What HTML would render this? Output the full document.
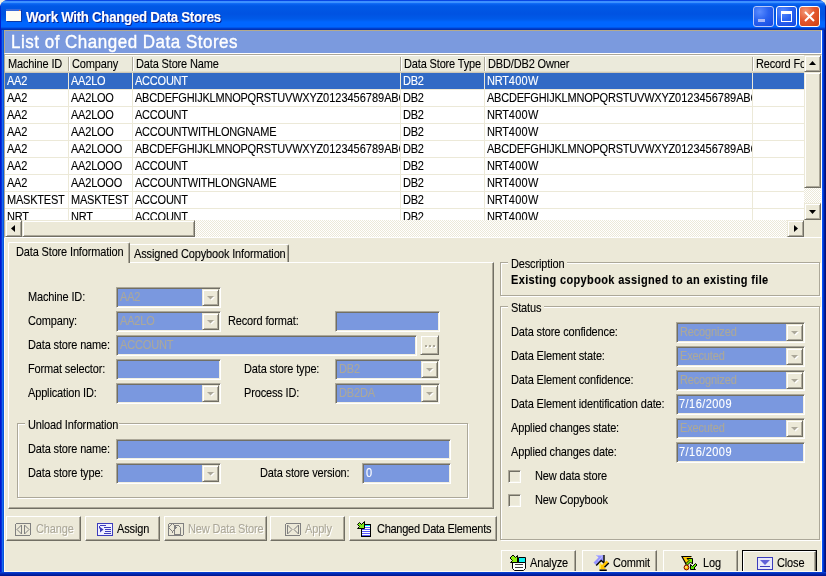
<!DOCTYPE html><html><head><meta charset="utf-8"><style>
*{box-sizing:border-box;margin:0;padding:0}
html,body{width:826px;height:576px;overflow:hidden;background:#f3f0e2}
body{position:relative;font-family:"Liberation Sans",sans-serif;font-size:11px;letter-spacing:-0.15px;color:#000}
.a{position:absolute}
.t{position:absolute;white-space:nowrap;line-height:12px;transform:scaleY(1.12);transform-origin:0 9.8px;will-change:transform;-webkit-text-stroke-width:0.1px}
#win{position:absolute;left:0;top:0;width:826px;height:576px;border-radius:8px 8px 0 0;overflow:hidden;
 background:linear-gradient(90deg,#0019cf 0,#0019cf 1px,#0a30d8 1px,#0a30d8 2px,#166aee 2px,#166aee 3px,#0855dd 3px,#0855dd 822px,#0550f5 822px,#0550f5 823px,#0036cc 823px,#0036cc 824px,#001c98 824px,#001c98 825px,#00107c 825px)}
#title{position:absolute;left:0;top:0;width:826px;height:30px;
 background:linear-gradient(180deg,#0846e4 0,#0846e4 1px,#3d90ff 1px,#3d90ff 3px,#1474fc 3px,#0a62f0 4px,#0058e6 6px,#0053e2 14px,#005ae8 19px,#0066ff 22px,#0066ff 27px,#0048d8 28px,#0036c0 29px,#0030b0 30px)}
#client{position:absolute;left:4px;top:30px;width:818px;height:542px;background:#ece9d8;border-left:1px solid #fffbf0;border-right:1px solid #fffbf0;border-bottom:1px solid #fffbf0}
#bottomb{position:absolute;z-index:10;left:0;top:572px;width:826px;height:4px;background:linear-gradient(180deg,#0848e0,#0532c0 1px,#001c9c 3px,#00138a 4px)}
.sunk{position:absolute;border:1px solid;border-color:#aca899 #fff #fff #aca899;box-shadow:inset 1px 1px #716f64,inset -1px -1px #f1efe2;background:#7a98df}
.btn{position:absolute;border:1px solid;border-color:#fff #716f64 #716f64 #fff;box-shadow:inset -1px -1px #aca899;background:#ece9d8}
.sbtn{position:absolute;border:1px solid;border-color:#ece9d8 #716f64 #716f64 #ece9d8;box-shadow:inset 1px 1px #fff,inset -1px -1px #aca899;background:#ece9d8}
.grp{position:absolute;border:1px solid #aca899;box-shadow:1px 1px #fff,inset 1px 1px #fff}
.dis{color:#aca899}
.track{position:absolute;background:repeating-conic-gradient(#ece9d8 0 25%,#fff 0 50%) 0 0/2px 2px}
</style></head><body><div id="win"><div id="title"></div><div id="client"></div><div id="bottomb"></div><div class="a" style="left:6px;top:9px;width:15px;height:13px">
<div class="a" style="left:0;top:0;width:15px;height:12px;background:#fffdf4;border-top:2px solid #3a6ad8;box-shadow:1px 1px #0b3aa8"></div>
<div class="a" style="left:13px;top:1px;width:1px;height:1px;background:#f06020"></div></div><div class="t" style="left:26px;top:10px;font-weight:bold;font-size:13.3px;letter-spacing:-0.3px;line-height:15px;color:#fff;text-shadow:1px 1px #0a1e8c">Work With Changed Data Stores</div><div class="a" style="left:753px;top:6px;width:21px;height:21px;border:1px solid #b8c8f8;border-radius:3px;background:radial-gradient(circle at 30% 25%,#5a8cff 0,#2a63f0 45%,#1548e0 100%)"><div class="a" style="left:4px;top:12px;width:7px;height:3px;background:#a8b8f8"></div></div><div class="a" style="left:776px;top:6px;width:21px;height:21px;border:1px solid #fff;border-radius:3px;background:radial-gradient(circle at 30% 25%,#5a8cff 0,#2a63f0 45%,#1548e0 100%)"><div class="a" style="left:4px;top:4px;width:11px;height:11px;border:1px solid #fff;border-top-width:3px"></div></div><div class="a" style="left:799px;top:6px;width:21px;height:21px;border:1px solid #fff;border-radius:3px;background:radial-gradient(circle at 30% 25%,#f39a7a 0,#e3572f 45%,#d0400f 100%)"><svg class="a" style="left:4px;top:4px" width="11" height="11"><path d="M1 1L10 10M10 1L1 10" stroke="#fff" stroke-width="2"/></svg></div><div class="a" style="left:0;top:6px;width:1px;height:24px;background:linear-gradient(180deg,#0030d0,#0019cf)"></div><div class="a" style="left:825px;top:6px;width:1px;height:24px;background:#001ea0"></div><div class="a" style="left:4px;top:30px;width:818px;height:24px;background:#7b9ade;border:1px solid;border-color:#b5aa8a #fff #fff #b5aa8a"></div><div class="t" style="left:11px;top:31px;font-size:17px;letter-spacing:0.5px;line-height:21px;color:#fff;-webkit-text-stroke:0.35px #fff">List of Changed Data Stores</div><div class="a" style="left:4px;top:54px;width:818px;height:184px;background:#fff;border:1px solid;border-color:#aca899 #fff #fff #aca899;overflow:hidden"><div class="a" style="left:0;top:0;width:816px;height:18px;background:linear-gradient(180deg,#fff 0,#fff 1px,#ebeadb 1px,#ebeadb 16px,#e2dfcc 16px,#e2dfcc 17px,#cbc7b8 17px)"></div><div class="t" style="left:3px;top:3px;">Machine ID</div><div class="a" style="left:63px;top:2px;width:1px;height:14px;background:#aca899"></div><div class="a" style="left:64px;top:2px;width:1px;height:14px;background:#fff"></div><div class="t" style="left:67px;top:3px;">Company</div><div class="a" style="left:127px;top:2px;width:1px;height:14px;background:#aca899"></div><div class="a" style="left:128px;top:2px;width:1px;height:14px;background:#fff"></div><div class="t" style="left:131px;top:3px;">Data Store Name</div><div class="a" style="left:395px;top:2px;width:1px;height:14px;background:#aca899"></div><div class="a" style="left:396px;top:2px;width:1px;height:14px;background:#fff"></div><div class="t" style="left:399px;top:3px;">Data Store Type</div><div class="a" style="left:479px;top:2px;width:1px;height:14px;background:#aca899"></div><div class="a" style="left:480px;top:2px;width:1px;height:14px;background:#fff"></div><div class="t" style="left:483px;top:3px;">DBD/DB2 Owner</div><div class="a" style="left:747px;top:2px;width:1px;height:14px;background:#aca899"></div><div class="a" style="left:748px;top:2px;width:1px;height:14px;background:#fff"></div><div class="t" style="left:751px;top:3px;">Record Format</div><div class="a" style="left:0;top:18px;width:799px;height:16px;background:#316ac5"></div><div class="a" style="left:0;top:34px;width:799px;height:1px;background:#ece9d8"></div><div class="a" style="left:0px;top:18px;width:63px;height:16px;overflow:hidden"><div class="t" style="left:2px;top:2px;color:#fff;letter-spacing:-0.22px">AA2</div></div><div class="a" style="left:63px;top:18px;width:1px;height:17px;background:#ece9d8"></div><div class="a" style="left:64px;top:18px;width:63px;height:16px;overflow:hidden"><div class="t" style="left:2px;top:2px;color:#fff;letter-spacing:-0.22px">AA2LO</div></div><div class="a" style="left:127px;top:18px;width:1px;height:17px;background:#ece9d8"></div><div class="a" style="left:128px;top:18px;width:267px;height:16px;overflow:hidden"><div class="t" style="left:2px;top:2px;color:#fff;letter-spacing:-0.22px">ACCOUNT</div></div><div class="a" style="left:395px;top:18px;width:1px;height:17px;background:#ece9d8"></div><div class="a" style="left:396px;top:18px;width:83px;height:16px;overflow:hidden"><div class="t" style="left:2px;top:2px;color:#fff;letter-spacing:-0.22px">DB2</div></div><div class="a" style="left:479px;top:18px;width:1px;height:17px;background:#ece9d8"></div><div class="a" style="left:480px;top:18px;width:267px;height:16px;overflow:hidden"><div class="t" style="left:2px;top:2px;color:#fff;letter-spacing:-0.22px">NRT<span style="letter-spacing:0.3px">400</span>W</div></div><div class="a" style="left:747px;top:18px;width:1px;height:17px;background:#ece9d8"></div><div class="a" style="left:0;top:35px;width:799px;height:16px;background:#fff"></div><div class="a" style="left:0;top:51px;width:799px;height:1px;background:#ece9d8"></div><div class="a" style="left:0px;top:35px;width:63px;height:16px;overflow:hidden"><div class="t" style="left:2px;top:2px;color:#000;letter-spacing:-0.22px">AA2</div></div><div class="a" style="left:63px;top:35px;width:1px;height:17px;background:#ece9d8"></div><div class="a" style="left:64px;top:35px;width:63px;height:16px;overflow:hidden"><div class="t" style="left:2px;top:2px;color:#000;letter-spacing:-0.22px">AA2LOO</div></div><div class="a" style="left:127px;top:35px;width:1px;height:17px;background:#ece9d8"></div><div class="a" style="left:128px;top:35px;width:267px;height:16px;overflow:hidden"><div class="t" style="left:2px;top:2px;color:#000;letter-spacing:-0.22px">ABCDEFGHIJKLMNOPQRSTUVWXYZ<span style="letter-spacing:0">0123456789</span>ABCDEFGH</div></div><div class="a" style="left:395px;top:35px;width:1px;height:17px;background:#ece9d8"></div><div class="a" style="left:396px;top:35px;width:83px;height:16px;overflow:hidden"><div class="t" style="left:2px;top:2px;color:#000;letter-spacing:-0.22px">DB2</div></div><div class="a" style="left:479px;top:35px;width:1px;height:17px;background:#ece9d8"></div><div class="a" style="left:480px;top:35px;width:267px;height:16px;overflow:hidden"><div class="t" style="left:2px;top:2px;color:#000;letter-spacing:-0.22px">ABCDEFGHIJKLMNOPQRSTUVWXYZ<span style="letter-spacing:0">0123456789</span>ABCDEFGH</div></div><div class="a" style="left:747px;top:35px;width:1px;height:17px;background:#ece9d8"></div><div class="a" style="left:0;top:52px;width:799px;height:16px;background:#fff"></div><div class="a" style="left:0;top:68px;width:799px;height:1px;background:#ece9d8"></div><div class="a" style="left:0px;top:52px;width:63px;height:16px;overflow:hidden"><div class="t" style="left:2px;top:2px;color:#000;letter-spacing:-0.22px">AA2</div></div><div class="a" style="left:63px;top:52px;width:1px;height:17px;background:#ece9d8"></div><div class="a" style="left:64px;top:52px;width:63px;height:16px;overflow:hidden"><div class="t" style="left:2px;top:2px;color:#000;letter-spacing:-0.22px">AA2LOO</div></div><div class="a" style="left:127px;top:52px;width:1px;height:17px;background:#ece9d8"></div><div class="a" style="left:128px;top:52px;width:267px;height:16px;overflow:hidden"><div class="t" style="left:2px;top:2px;color:#000;letter-spacing:-0.22px">ACCOUNT</div></div><div class="a" style="left:395px;top:52px;width:1px;height:17px;background:#ece9d8"></div><div class="a" style="left:396px;top:52px;width:83px;height:16px;overflow:hidden"><div class="t" style="left:2px;top:2px;color:#000;letter-spacing:-0.22px">DB2</div></div><div class="a" style="left:479px;top:52px;width:1px;height:17px;background:#ece9d8"></div><div class="a" style="left:480px;top:52px;width:267px;height:16px;overflow:hidden"><div class="t" style="left:2px;top:2px;color:#000;letter-spacing:-0.22px">NRT<span style="letter-spacing:0.3px">400</span>W</div></div><div class="a" style="left:747px;top:52px;width:1px;height:17px;background:#ece9d8"></div><div class="a" style="left:0;top:69px;width:799px;height:16px;background:#fff"></div><div class="a" style="left:0;top:85px;width:799px;height:1px;background:#ece9d8"></div><div class="a" style="left:0px;top:69px;width:63px;height:16px;overflow:hidden"><div class="t" style="left:2px;top:2px;color:#000;letter-spacing:-0.22px">AA2</div></div><div class="a" style="left:63px;top:69px;width:1px;height:17px;background:#ece9d8"></div><div class="a" style="left:64px;top:69px;width:63px;height:16px;overflow:hidden"><div class="t" style="left:2px;top:2px;color:#000;letter-spacing:-0.22px">AA2LOO</div></div><div class="a" style="left:127px;top:69px;width:1px;height:17px;background:#ece9d8"></div><div class="a" style="left:128px;top:69px;width:267px;height:16px;overflow:hidden"><div class="t" style="left:2px;top:2px;color:#000;letter-spacing:-0.22px">ACCOUNTWITHLONGNAME</div></div><div class="a" style="left:395px;top:69px;width:1px;height:17px;background:#ece9d8"></div><div class="a" style="left:396px;top:69px;width:83px;height:16px;overflow:hidden"><div class="t" style="left:2px;top:2px;color:#000;letter-spacing:-0.22px">DB2</div></div><div class="a" style="left:479px;top:69px;width:1px;height:17px;background:#ece9d8"></div><div class="a" style="left:480px;top:69px;width:267px;height:16px;overflow:hidden"><div class="t" style="left:2px;top:2px;color:#000;letter-spacing:-0.22px">NRT<span style="letter-spacing:0.3px">400</span>W</div></div><div class="a" style="left:747px;top:69px;width:1px;height:17px;background:#ece9d8"></div><div class="a" style="left:0;top:86px;width:799px;height:16px;background:#fff"></div><div class="a" style="left:0;top:102px;width:799px;height:1px;background:#ece9d8"></div><div class="a" style="left:0px;top:86px;width:63px;height:16px;overflow:hidden"><div class="t" style="left:2px;top:2px;color:#000;letter-spacing:-0.22px">AA2</div></div><div class="a" style="left:63px;top:86px;width:1px;height:17px;background:#ece9d8"></div><div class="a" style="left:64px;top:86px;width:63px;height:16px;overflow:hidden"><div class="t" style="left:2px;top:2px;color:#000;letter-spacing:-0.22px">AA2LOOO</div></div><div class="a" style="left:127px;top:86px;width:1px;height:17px;background:#ece9d8"></div><div class="a" style="left:128px;top:86px;width:267px;height:16px;overflow:hidden"><div class="t" style="left:2px;top:2px;color:#000;letter-spacing:-0.22px">ABCDEFGHIJKLMNOPQRSTUVWXYZ<span style="letter-spacing:0">0123456789</span>ABCDEFGH</div></div><div class="a" style="left:395px;top:86px;width:1px;height:17px;background:#ece9d8"></div><div class="a" style="left:396px;top:86px;width:83px;height:16px;overflow:hidden"><div class="t" style="left:2px;top:2px;color:#000;letter-spacing:-0.22px">DB2</div></div><div class="a" style="left:479px;top:86px;width:1px;height:17px;background:#ece9d8"></div><div class="a" style="left:480px;top:86px;width:267px;height:16px;overflow:hidden"><div class="t" style="left:2px;top:2px;color:#000;letter-spacing:-0.22px">ABCDEFGHIJKLMNOPQRSTUVWXYZ<span style="letter-spacing:0">0123456789</span>ABCDEFGH</div></div><div class="a" style="left:747px;top:86px;width:1px;height:17px;background:#ece9d8"></div><div class="a" style="left:0;top:103px;width:799px;height:16px;background:#fff"></div><div class="a" style="left:0;top:119px;width:799px;height:1px;background:#ece9d8"></div><div class="a" style="left:0px;top:103px;width:63px;height:16px;overflow:hidden"><div class="t" style="left:2px;top:2px;color:#000;letter-spacing:-0.22px">AA2</div></div><div class="a" style="left:63px;top:103px;width:1px;height:17px;background:#ece9d8"></div><div class="a" style="left:64px;top:103px;width:63px;height:16px;overflow:hidden"><div class="t" style="left:2px;top:2px;color:#000;letter-spacing:-0.22px">AA2LOOO</div></div><div class="a" style="left:127px;top:103px;width:1px;height:17px;background:#ece9d8"></div><div class="a" style="left:128px;top:103px;width:267px;height:16px;overflow:hidden"><div class="t" style="left:2px;top:2px;color:#000;letter-spacing:-0.22px">ACCOUNT</div></div><div class="a" style="left:395px;top:103px;width:1px;height:17px;background:#ece9d8"></div><div class="a" style="left:396px;top:103px;width:83px;height:16px;overflow:hidden"><div class="t" style="left:2px;top:2px;color:#000;letter-spacing:-0.22px">DB2</div></div><div class="a" style="left:479px;top:103px;width:1px;height:17px;background:#ece9d8"></div><div class="a" style="left:480px;top:103px;width:267px;height:16px;overflow:hidden"><div class="t" style="left:2px;top:2px;color:#000;letter-spacing:-0.22px">NRT<span style="letter-spacing:0.3px">400</span>W</div></div><div class="a" style="left:747px;top:103px;width:1px;height:17px;background:#ece9d8"></div><div class="a" style="left:0;top:120px;width:799px;height:16px;background:#fff"></div><div class="a" style="left:0;top:136px;width:799px;height:1px;background:#ece9d8"></div><div class="a" style="left:0px;top:120px;width:63px;height:16px;overflow:hidden"><div class="t" style="left:2px;top:2px;color:#000;letter-spacing:-0.22px">AA2</div></div><div class="a" style="left:63px;top:120px;width:1px;height:17px;background:#ece9d8"></div><div class="a" style="left:64px;top:120px;width:63px;height:16px;overflow:hidden"><div class="t" style="left:2px;top:2px;color:#000;letter-spacing:-0.22px">AA2LOOO</div></div><div class="a" style="left:127px;top:120px;width:1px;height:17px;background:#ece9d8"></div><div class="a" style="left:128px;top:120px;width:267px;height:16px;overflow:hidden"><div class="t" style="left:2px;top:2px;color:#000;letter-spacing:-0.22px">ACCOUNTWITHLONGNAME</div></div><div class="a" style="left:395px;top:120px;width:1px;height:17px;background:#ece9d8"></div><div class="a" style="left:396px;top:120px;width:83px;height:16px;overflow:hidden"><div class="t" style="left:2px;top:2px;color:#000;letter-spacing:-0.22px">DB2</div></div><div class="a" style="left:479px;top:120px;width:1px;height:17px;background:#ece9d8"></div><div class="a" style="left:480px;top:120px;width:267px;height:16px;overflow:hidden"><div class="t" style="left:2px;top:2px;color:#000;letter-spacing:-0.22px">NRT<span style="letter-spacing:0.3px">400</span>W</div></div><div class="a" style="left:747px;top:120px;width:1px;height:17px;background:#ece9d8"></div><div class="a" style="left:0;top:137px;width:799px;height:16px;background:#fff"></div><div class="a" style="left:0;top:153px;width:799px;height:1px;background:#ece9d8"></div><div class="a" style="left:0px;top:137px;width:63px;height:16px;overflow:hidden"><div class="t" style="left:2px;top:2px;color:#000;letter-spacing:-0.22px">MASKTEST</div></div><div class="a" style="left:63px;top:137px;width:1px;height:17px;background:#ece9d8"></div><div class="a" style="left:64px;top:137px;width:63px;height:16px;overflow:hidden"><div class="t" style="left:2px;top:2px;color:#000;letter-spacing:-0.22px">MASKTEST</div></div><div class="a" style="left:127px;top:137px;width:1px;height:17px;background:#ece9d8"></div><div class="a" style="left:128px;top:137px;width:267px;height:16px;overflow:hidden"><div class="t" style="left:2px;top:2px;color:#000;letter-spacing:-0.22px">ACCOUNT</div></div><div class="a" style="left:395px;top:137px;width:1px;height:17px;background:#ece9d8"></div><div class="a" style="left:396px;top:137px;width:83px;height:16px;overflow:hidden"><div class="t" style="left:2px;top:2px;color:#000;letter-spacing:-0.22px">DB2</div></div><div class="a" style="left:479px;top:137px;width:1px;height:17px;background:#ece9d8"></div><div class="a" style="left:480px;top:137px;width:267px;height:16px;overflow:hidden"><div class="t" style="left:2px;top:2px;color:#000;letter-spacing:-0.22px">NRT<span style="letter-spacing:0.3px">400</span>W</div></div><div class="a" style="left:747px;top:137px;width:1px;height:17px;background:#ece9d8"></div><div class="a" style="left:0;top:154px;width:799px;height:16px;background:#fff"></div><div class="a" style="left:0;top:170px;width:799px;height:1px;background:#ece9d8"></div><div class="a" style="left:0px;top:154px;width:63px;height:16px;overflow:hidden"><div class="t" style="left:2px;top:2px;color:#000;letter-spacing:-0.22px">NRT</div></div><div class="a" style="left:63px;top:154px;width:1px;height:17px;background:#ece9d8"></div><div class="a" style="left:64px;top:154px;width:63px;height:16px;overflow:hidden"><div class="t" style="left:2px;top:2px;color:#000;letter-spacing:-0.22px">NRT</div></div><div class="a" style="left:127px;top:154px;width:1px;height:17px;background:#ece9d8"></div><div class="a" style="left:128px;top:154px;width:267px;height:16px;overflow:hidden"><div class="t" style="left:2px;top:2px;color:#000;letter-spacing:-0.22px">ACCOUNT</div></div><div class="a" style="left:395px;top:154px;width:1px;height:17px;background:#ece9d8"></div><div class="a" style="left:396px;top:154px;width:83px;height:16px;overflow:hidden"><div class="t" style="left:2px;top:2px;color:#000;letter-spacing:-0.22px">DB2</div></div><div class="a" style="left:479px;top:154px;width:1px;height:17px;background:#ece9d8"></div><div class="a" style="left:480px;top:154px;width:267px;height:16px;overflow:hidden"><div class="t" style="left:2px;top:2px;color:#000;letter-spacing:-0.22px">NRT<span style="letter-spacing:0.3px">400</span>W</div></div><div class="a" style="left:747px;top:154px;width:1px;height:17px;background:#ece9d8"></div><div class="track" style="left:799px;top:0;width:17px;height:165px"></div><div class="sbtn" style="left:799px;top:0;width:17px;height:17px"><svg class="a" style="left:4px;top:5px" width="7" height="4"><path d="M3.5 0L7 4H0Z" fill="#000"/></svg></div><div class="sbtn" style="left:799px;top:17px;width:17px;height:116px"></div><div class="sbtn" style="left:799px;top:148px;width:17px;height:17px"><svg class="a" style="left:4px;top:6px" width="7" height="4"><path d="M0 0H7L3.5 4Z" fill="#000"/></svg></div><div class="track" style="left:0;top:165px;width:799px;height:17px"></div><div class="sbtn" style="left:0;top:165px;width:17px;height:17px"><svg class="a" style="left:5px;top:4px" width="4" height="7"><path d="M0 3.5L4 0V7Z" fill="#000"/></svg></div><div class="sbtn" style="left:17px;top:165px;width:173px;height:17px"></div><div class="sbtn" style="left:782px;top:165px;width:17px;height:17px"><svg class="a" style="left:6px;top:4px" width="4" height="7"><path d="M0 0L4 3.5L0 7Z" fill="#000"/></svg></div><div class="a" style="left:799px;top:165px;width:17px;height:17px;background:#ece9d8"></div></div><div class="a" style="left:8px;top:262px;width:486px;height:247px;border:1px solid;border-color:#fff #716f64 #716f64 #fff;box-shadow:inset -1px -1px #aca899"></div><div class="a" style="left:8px;top:242px;width:122px;height:21px;background:#ece9d8;border:1px solid;border-bottom:0;border-color:#fff #716f64 #ece9d8 #fff;box-shadow:inset -1px 0 #aca899;border-radius:2px 2px 0 0"></div><div class="t " style="left:16px;top:246px;">Data Store Information</div><div class="a" style="left:130px;top:244px;width:159px;height:18px;border-top:1px solid #fff;border-right:1px solid #716f64;box-shadow:inset -1px 0 #aca899;border-radius:0 2px 0 0"></div><div class="t " style="left:134px;top:248px;">Assigned Copybook Information</div><div class="t " style="left:28px;top:291px;">Machine ID:</div><div class="sunk" style="left:116px;top:287px;width:105px;height:21px"></div><div class="t dis" style="left:120px;top:291px;color:#aca899">AA2</div><div class="sbtn" style="left:202px;top:289px;width:17px;height:17px"><svg class="a" style="left:4px;top:6px" width="8" height="5"><path d="M1 1H8L4.5 4.5Z" fill="#fff"/><path d="M0 0H7L3.5 3.5Z" fill="#aca899"/></svg></div><div class="t " style="left:28px;top:315px;">Company:</div><div class="sunk" style="left:116px;top:311px;width:105px;height:21px"></div><div class="t dis" style="left:120px;top:315px;color:#aca899">AA2LO</div><div class="sbtn" style="left:202px;top:313px;width:17px;height:17px"><svg class="a" style="left:4px;top:6px" width="8" height="5"><path d="M1 1H8L4.5 4.5Z" fill="#fff"/><path d="M0 0H7L3.5 3.5Z" fill="#aca899"/></svg></div><div class="t " style="left:228px;top:315px;">Record format:</div><div class="sunk" style="left:335px;top:311px;width:105px;height:21px"></div><div class="t " style="left:28px;top:339px;">Data store name:</div><div class="sunk" style="left:116px;top:335px;width:301px;height:21px"></div><div class="t dis" style="left:120px;top:339px;color:#aca899">ACCOUNT</div><div class="sbtn" style="left:420px;top:335px;width:19px;height:20px"><div class="a" style="left:4px;top:9px;width:2px;height:2px;background:#aca899;box-shadow:1px 1px #fff,4px 0 #aca899,5px 1px #fff,8px 0 #aca899,9px 1px #fff"></div></div><div class="t " style="left:28px;top:363px;">Format selector:</div><div class="sunk" style="left:116px;top:359px;width:105px;height:21px"></div><div class="t " style="left:244px;top:363px;">Data store type:</div><div class="sunk" style="left:335px;top:359px;width:105px;height:21px"></div><div class="t dis" style="left:339px;top:363px;color:#aca899">DB2</div><div class="sbtn" style="left:421px;top:361px;width:17px;height:17px"><svg class="a" style="left:4px;top:6px" width="8" height="5"><path d="M1 1H8L4.5 4.5Z" fill="#fff"/><path d="M0 0H7L3.5 3.5Z" fill="#aca899"/></svg></div><div class="t " style="left:28px;top:387px;">Application ID:</div><div class="sunk" style="left:116px;top:383px;width:105px;height:21px"></div><div class="sbtn" style="left:202px;top:385px;width:17px;height:17px"><svg class="a" style="left:4px;top:6px" width="8" height="5"><path d="M1 1H8L4.5 4.5Z" fill="#fff"/><path d="M0 0H7L3.5 3.5Z" fill="#aca899"/></svg></div><div class="t " style="left:244px;top:387px;">Process ID:</div><div class="sunk" style="left:335px;top:383px;width:105px;height:21px"></div><div class="t dis" style="left:339px;top:387px;color:#aca899">DB2DA</div><div class="sbtn" style="left:421px;top:385px;width:17px;height:17px"><svg class="a" style="left:4px;top:6px" width="8" height="5"><path d="M1 1H8L4.5 4.5Z" fill="#fff"/><path d="M0 0H7L3.5 3.5Z" fill="#aca899"/></svg></div><div class="grp" style="left:17px;top:423px;width:451px;height:75px"></div><div class="a" style="left:25px;top:418px;width:94px;height:14px;background:#ece9d8"></div><div class="t " style="left:28px;top:419px;">Unload Information</div><div class="t " style="left:28px;top:443px;">Data store name:</div><div class="sunk" style="left:116px;top:439px;width:335px;height:21px"></div><div class="t " style="left:28px;top:467px;">Data store type:</div><div class="sunk" style="left:116px;top:463px;width:105px;height:21px"></div><div class="sbtn" style="left:202px;top:465px;width:17px;height:17px"><svg class="a" style="left:4px;top:6px" width="8" height="5"><path d="M1 1H8L4.5 4.5Z" fill="#fff"/><path d="M0 0H7L3.5 3.5Z" fill="#aca899"/></svg></div><div class="t " style="left:260px;top:467px;">Data store version:</div><div class="sunk" style="left:362px;top:463px;width:89px;height:21px"></div><div class="t " style="left:366px;top:467px;color:#fff">0</div><div class="btn" style="left:6px;top:516px;width:75px;height:25px"></div><div class="t " style="left:36px;top:523px;color:#aca899;text-shadow:1px 1px #fff">Change</div><div class="btn" style="left:85px;top:516px;width:75px;height:25px"></div><div class="t " style="left:117px;top:523px;">Assign</div><div class="btn" style="left:164px;top:516px;width:103px;height:25px"></div><div class="t " style="left:188px;top:523px;color:#aca899;text-shadow:1px 1px #fff">New Data Store</div><div class="btn" style="left:270px;top:516px;width:75px;height:25px"></div><div class="t " style="left:305px;top:523px;color:#aca899;text-shadow:1px 1px #fff">Apply</div><div class="btn" style="left:349px;top:516px;width:148px;height:25px"></div><div class="t " style="left:377px;top:523px;;letter-spacing:-0.27px">Changed Data Elements</div><svg class="a" style="left:15px;top:523px;overflow:visible" width="17" height="14"><rect shape-rendering="crispEdges" x="0.5" y="0.5" width="15" height="12" rx="1.5" fill="none" stroke="#808080"/><path d="M6.5 2V11M9.5 2V11" stroke="#808080"/><path d="M6.5 2L2 6.5L6.5 11M9.5 2L14 6.5L9.5 11" fill="none" stroke="#808080" shape-rendering="auto"/></svg><svg class="a" style="left:285px;top:523px;overflow:visible" width="17" height="14"><rect shape-rendering="crispEdges" x="0.5" y="0.5" width="15" height="12" rx="1.5" fill="none" stroke="#808080"/><path d="M2.5 2V11M13.5 2V11" stroke="#808080"/><path d="M2.5 2L7 6.5L2.5 11M13.5 2L9 6.5L13.5 11" fill="none" stroke="#808080" shape-rendering="auto"/></svg><svg class="a" style="left:168px;top:523px;overflow:visible" width="17" height="14"><rect shape-rendering="crispEdges" x="0.5" y="0.5" width="15" height="12" rx="1.5" fill="none" stroke="#808080"/><path d="M4.5 0.5L8.5 4.5L4.5 8.5L0.5 4.5Z" fill="none" stroke="#808080" shape-rendering="auto"/><path d="M4.5 8V10M7 4.5H9" stroke="#808080" shape-rendering="crispEdges"/><path d="M6.5 12V2.5H10.5" fill="none" stroke="#808080" shape-rendering="crispEdges"/><path d="M10.5 2.5L12.5 4.5V12" fill="none" stroke="#808080"/><path d="M6 12H13" stroke="#808080" stroke-width="2" shape-rendering="crispEdges"/></svg><svg class="a" style="left:97px;top:523px;overflow:visible" width="17" height="14"><rect shape-rendering="crispEdges" x="0.5" y="0.5" width="15" height="12" rx="1.5" fill="#f0f0ff" stroke="#3c3cbc" stroke-width="1.2"/><path d="M3 2.5H9M2.5 3V5.5M7 4.5H14M8 6.5H14M8 8.5H14M7 10.5H14" stroke="#3c3cbc"/><path d="M3 4V9.5L6.5 6.5Z" fill="#3c3cbc" shape-rendering="auto"/></svg><svg class="a" style="left:357px;top:521px;overflow:visible" width="15" height="17"><rect x="4.5" y="3.5" width="9" height="12" fill="#fff" stroke="#000"/><path d="M5 4.5H13" stroke="#00e8f8"/><path d="M5 6.5H13M5 8.5H13M5 10.5H13M5 12.5H13M5 14.5H13" stroke="#5a5aff"/><path d="M7.5 0.5V7.5H0.5L2.5 5.5L0.5 3.5L2.5 1.5L4.5 3.5Z" fill="#80e820" stroke="#000" shape-rendering="auto"/></svg><div class="grp" style="left:500px;top:262px;width:320px;height:34px"></div><div class="a" style="left:508px;top:256px;width:59px;height:14px;background:#ece9d8"></div><div class="t " style="left:511px;top:258px;">Description</div><div class="t " style="left:511px;top:274px;font-weight:bold;letter-spacing:0.35px">Existing copybook assigned to an existing file</div><div class="grp" style="left:500px;top:306px;width:320px;height:234px"></div><div class="a" style="left:508px;top:300px;width:36px;height:14px;background:#ece9d8"></div><div class="t " style="left:511px;top:302px;">Status</div><div class="t " style="left:511px;top:326px;">Data store confidence:</div><div class="sunk" style="left:676px;top:322px;width:129px;height:21px"></div><div class="t dis" style="left:680px;top:326px;color:#aca899">Recognized</div><div class="sbtn" style="left:786px;top:324px;width:17px;height:17px"><svg class="a" style="left:4px;top:6px" width="8" height="5"><path d="M1 1H8L4.5 4.5Z" fill="#fff"/><path d="M0 0H7L3.5 3.5Z" fill="#aca899"/></svg></div><div class="t " style="left:511px;top:350px;">Data Element state:</div><div class="sunk" style="left:676px;top:346px;width:129px;height:21px"></div><div class="t dis" style="left:680px;top:350px;color:#aca899">Executed</div><div class="sbtn" style="left:786px;top:348px;width:17px;height:17px"><svg class="a" style="left:4px;top:6px" width="8" height="5"><path d="M1 1H8L4.5 4.5Z" fill="#fff"/><path d="M0 0H7L3.5 3.5Z" fill="#aca899"/></svg></div><div class="t " style="left:511px;top:374px;">Data Element confidence:</div><div class="sunk" style="left:676px;top:370px;width:129px;height:21px"></div><div class="t dis" style="left:680px;top:374px;color:#aca899">Recognized</div><div class="sbtn" style="left:786px;top:372px;width:17px;height:17px"><svg class="a" style="left:4px;top:6px" width="8" height="5"><path d="M1 1H8L4.5 4.5Z" fill="#fff"/><path d="M0 0H7L3.5 3.5Z" fill="#aca899"/></svg></div><div class="t " style="left:511px;top:398px;">Data Element identification date:</div><div class="sunk" style="left:676px;top:394px;width:129px;height:21px"></div><div class="t " style="left:679px;top:398px;color:#fff;letter-spacing:0.45px">7/16/2009</div><div class="t " style="left:511px;top:422px;">Applied changes state:</div><div class="sunk" style="left:676px;top:418px;width:129px;height:21px"></div><div class="t dis" style="left:680px;top:422px;color:#aca899">Executed</div><div class="sbtn" style="left:786px;top:420px;width:17px;height:17px"><svg class="a" style="left:4px;top:6px" width="8" height="5"><path d="M1 1H8L4.5 4.5Z" fill="#fff"/><path d="M0 0H7L3.5 3.5Z" fill="#aca899"/></svg></div><div class="t " style="left:511px;top:446px;">Applied changes date:</div><div class="sunk" style="left:676px;top:442px;width:129px;height:21px"></div><div class="t " style="left:679px;top:446px;color:#fff;letter-spacing:0.45px">7/16/2009</div><div class="sunk" style="left:508px;top:470px;width:13px;height:13px;background:#ece9d8"></div><div class="t " style="left:535px;top:470px;">New data store</div><div class="sunk" style="left:508px;top:494px;width:13px;height:13px;background:#ece9d8"></div><div class="t " style="left:535px;top:494px;">New Copybook</div><div class="btn" style="left:501px;top:550px;width:75px;height:25px"></div><div class="t " style="left:530px;top:557px;">Analyze</div><div class="btn" style="left:582px;top:550px;width:75px;height:25px"></div><div class="t " style="left:613px;top:557px;">Commit</div><div class="btn" style="left:663px;top:550px;width:75px;height:25px"></div><div class="t " style="left:703px;top:557px;">Log</div><div class="a" style="left:742px;top:550px;width:75px;height:25px;border:1px solid #000"><div class="btn" style="left:0;top:0;width:73px;height:23px"></div></div><div class="t " style="left:777px;top:557px;">Close</div><svg class="a" style="left:508px;top:553px;overflow:visible" width="20" height="20"><path d="M4.5 9.5H17.5V15.5L15.5 17.5H6.5L4.5 15.5Z" fill="#fff" stroke="#000" shape-rendering="auto"/><path d="M10.5 4.5H17.5V9.5H10.5Z" fill="#10f0f0" stroke="#000"/><path d="M7 11.5H15M7 14.5H15" stroke="#404040"/><path d="M9.5 2.5V9.5H2.5L4.5 7.5L2 5L5 2L7.5 4.5Z" fill="#90f010" stroke="#000" shape-rendering="auto"/></svg><svg class="a" style="left:590px;top:552px;overflow:visible" width="20" height="20"><path d="M6 3H13.5V10.5L11 8L6 13L3.5 10.5L8.5 5.5Z" fill="#9696ff"/><path d="M6.5 3.5H12V5L8 9" stroke="#b8b8ff" stroke-width="1" fill="none"/><path d="M14 3V11L11.2 8.4L6.2 13.4" stroke="#000" stroke-width="1.4" fill="none"/><path d="M9.5 10.5L12 13L16.5 8.5L18.5 10.5L14 15L16.5 17.5H9.5Z" fill="#ffc400"/><path d="M10 11.5V17" stroke="#ffff60" stroke-width="1.2"/><path d="M9.5 18.2H16.8M18.8 10.9L14.5 15.2" stroke="#000" stroke-width="1.4" fill="none"/></svg><svg class="a" style="left:678px;top:552px;overflow:visible" width="20" height="20"><path d="M4 4.5H13.5L8 12.5Z" fill="#ffc800"/><path d="M13.5 4.5H4L8 12" stroke="#000" stroke-width="1.2" fill="none"/><path d="M9 6.5H14.5V12L12.5 10L9 13.5L7.5 12L11 8.5Z" fill="#80f000" stroke="#000" stroke-width="1"/><path d="M12.5 12.5L14.5 14.5L17.5 11.5L19 13L16 16L17.5 17.5H12.5Z" fill="#60e800" stroke="#000" stroke-width="1"/><circle cx="8.5" cy="15.5" r="2.4" fill="#ffb800" stroke="#800000" stroke-width="1"/><circle cx="8" cy="15" r="0.9" fill="#fff0a0"/></svg><svg class="a" style="left:757px;top:557px;overflow:visible" width="17" height="14"><rect shape-rendering="crispEdges" x="0.5" y="0.5" width="15" height="12" rx="1.5" fill="#e8e8fa" stroke="#3c3cbc" stroke-width="1.2"/><path d="M3 3H13L8 8Z" fill="#6060d8" shape-rendering="auto"/><path d="M3 9.5H13" stroke="#3c3cbc"/></svg><div class="a" style="left:4px;top:571px;width:818px;height:1px;background:#fffbf0;z-index:9"></div></div></body></html>
